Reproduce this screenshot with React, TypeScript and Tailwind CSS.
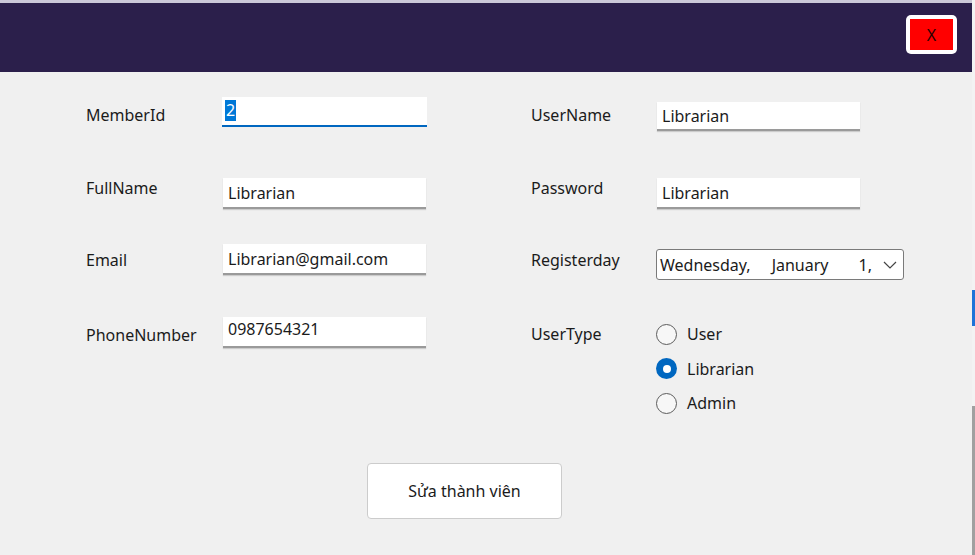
import React, { useState } from 'react';

const font = { fontFamily: '"Noto Sans", "Open Sans", sans-serif' };

const TextBox = ({ value, h = 'h-[31px]' }: { value: string; h?: string }) => (
  <div
    className={
      'flex w-[203px] items-center border-b-2 border-[#9a9a9a] bg-white pl-[5px] text-[16px] text-[#1b1b1b] shadow-[0_1px_1px_rgba(0,0,0,0.15)] ' +
      h
    }
  >
    {value}
  </div>
);

const Radio = ({ label, checked, onClick }: { label: string; checked: boolean; onClick: () => void }) => (
  <div className="flex h-[34.5px] cursor-default items-center gap-[10px]" onClick={onClick}>
    {checked ? (
      <span className="flex h-[21px] w-[21px] items-center justify-center rounded-full bg-[#0067c0]">
        <span className="h-[8px] w-[8px] rounded-full bg-white" />
      </span>
    ) : (
      <span className="h-[21px] w-[21px] rounded-full border-[1.5px] border-[#5c5c5c] bg-[#f7f7f7]" />
    )}
    <span className="text-[16px] text-[#1b1b1b]">{label}</span>
  </div>
);

const Label = ({ text, top }: { text: string; top: string }) => (
  <div className={'text-[16px] leading-[20px] text-[#1b1b1b] ' + top}>{text}</div>
);

export default function App() {
  const [userType, setUserType] = useState('Librarian');

  return (
    <div className="flex h-[555px] w-[975px] bg-[#f0f0f0]" style={font}>
      <div className="flex w-[972px] flex-col">
        {/* title bar */}
        <div className="flex h-[72px] items-start justify-end border-t-[3px] border-[#cbc8d8] bg-[#2b1f4b] pr-[15px] pt-[12px]">
          <div className="rounded-[5px] bg-white p-[4px]">
            <div className="flex h-[31px] w-[43px] items-center justify-center bg-[#ff0000] text-[16px] text-[#2a0000]">
              X
            </div>
          </div>
        </div>

        <div className="flex">
          {/* left column */}
          <div className="ml-[86px] flex flex-col pt-[25px]">
            <div className="flex">
              <Label text="MemberId" top="mt-[8px] w-[136px]" />
              <div className="flex h-[30px] w-[205px] items-start border-b-2 border-[#0067c0] bg-white pl-[3px] pt-[3px] text-[16px]">
                <span className="bg-[#0078d7] px-[1px] leading-[21px] text-white">2</span>
              </div>
            </div>
            <div className="mt-[51px] flex">
              <Label text="FullName" top="mt-0 w-[137px]" />
              <TextBox value="Librarian" />
            </div>
            <div className="mt-[35px] flex">
              <Label text="Email" top="mt-[6px] w-[137px]" />
              <TextBox value="Librarian@gmail.com" />
            </div>
            <div className="mt-[42px] flex">
              <Label text="PhoneNumber" top="mt-[8px] w-[137px]" />
              <div className="flex h-[31px] w-[203px] items-start border-b-2 border-[#9a9a9a] bg-white pl-[5px] text-[16px] leading-[24px] text-[#1b1b1b] shadow-[0_1px_1px_rgba(0,0,0,0.15)]">
                0987654321
              </div>
            </div>
          </div>

          {/* right column */}
          <div className="ml-[104px] flex flex-col pt-[30px]">
            <div className="flex">
              <Label text="UserName" top="mt-[3px] w-[126px]" />
              <TextBox value="Librarian" h="h-[29px]" />
            </div>
            <div className="mt-[47px] flex">
              <Label text="Password" top="mt-0 w-[126px]" />
              <TextBox value="Librarian" />
            </div>
            <div className="mt-[40px] flex">
              <Label text="Registerday" top="mt-[1px] w-[125px]" />
              <div className="flex h-[31px] w-[248px] items-center rounded-[3px] border border-[#7a7a7a] bg-white pl-[3px] pr-[6px] text-[16px] text-[#1b1b1b]">
                <span>Wednesday,</span>
                <span className="ml-[21px]">January</span>
                <span className="ml-[30px]">1,</span>
                <svg className="ml-auto" width="14" height="8" viewBox="0 0 14 8" fill="none" stroke="#444" strokeWidth="1.2">
                  <path d="M1 1l6 6 6-6" />
                </svg>
              </div>
            </div>
            <div className="mt-[37px] flex">
              <Label text="UserType" top="mt-[7px] w-[125px]" />
              <div className="flex flex-col">
                {['User', 'Librarian', 'Admin'].map((t) => (
                  <Radio key={t} label={t} checked={userType === t} onClick={() => setUserType(t)} />
                ))}
              </div>
            </div>
          </div>
        </div>

        <button className="ml-[367px] mt-[42px] h-[56px] w-[195px] rounded-[4px] border border-[#cccccc] bg-white text-[16px] text-[#1b1b1b]">
          Sửa thành viên
        </button>
      </div>

      {/* edge of window behind */}
      <div className="flex w-[3px] flex-col bg-[#f3f3f3]">
        <div className="h-[290px]" />
        <div className="h-[36px] bg-[#1e73d8]" />
        <div className="h-[80px]" />
        <div className="flex-1 bg-[#a0a0a0]" />
      </div>
    </div>
  );
}
